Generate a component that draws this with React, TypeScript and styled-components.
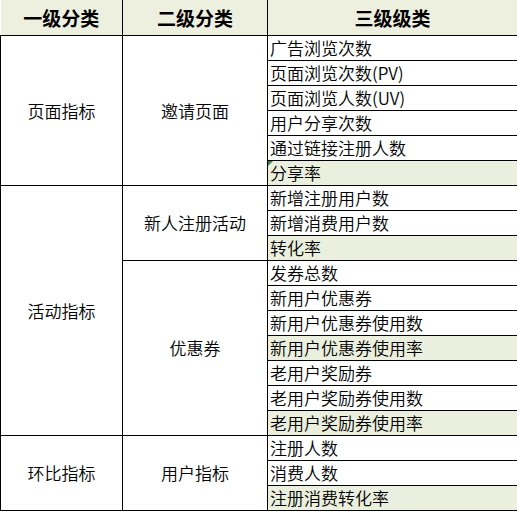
import styled, { createGlobalStyle } from 'styled-components'

const GlobalStyle = createGlobalStyle`
  html, body {
    margin: 0;
    padding: 0;
    background: #ffffff;
  }
  body {
    font-family: "Noto Sans CJK SC", "Microsoft YaHei", "Noto Sans", sans-serif;
    color: #000000;
  }
`

const HEAD_BG = '#edefdf'
const MARK_BG = '#ebf0de'

const Sheet = styled.table`
  width: 517px;
  border-collapse: collapse;
  table-layout: fixed;
`

const HeadRow = styled.tr`
  height: 35px;
`

const HeadCell = styled.th<{ $last?: boolean }>`
  background: ${HEAD_BG};
  font-size: 19px;
  font-weight: 700;
  text-align: center;
  padding: 0;
  border-bottom: 1px solid #000;
  border-right: 1px solid ${(p) => (p.$last ? '#8a8a80' : '#000')};
`

const BodyRow = styled.tr`
  height: 25px;
`

const GroupCell = styled.td`
  border: 1px solid #000;
  font-size: 17px;
  font-weight: 350;
  text-align: center;
  vertical-align: middle;
  padding: 0;
`

const ItemCell = styled.td<{ $mark?: boolean }>`
  position: relative;
  border: 1px solid #000;
  background: ${(p) => (p.$mark ? MARK_BG : '#fff')};
  font-size: 17px;
  font-weight: 350;
  line-height: 23px;
  padding: 0 0 0 2px;
  white-space: nowrap;
  overflow: hidden;
`

const NoteFlag = styled.span`
  position: absolute;
  left: 0;
  top: 0;
  width: 0;
  height: 0;
  border-top: 5px solid #2e8b3e;
  border-right: 5px solid transparent;
`

type Item = { label: string; mark?: boolean; flag?: boolean }
type Sub = { name: string; items: Item[] }
type Group = { name: string; subs: Sub[] }

const groups: Group[] = [
  {
    name: '页面指标',
    subs: [
      {
        name: '邀请页面',
        items: [
          { label: '广告浏览次数' },
          { label: '页面浏览次数(PV)' },
          { label: '页面浏览人数(UV)' },
          { label: '用户分享次数' },
          { label: '通过链接注册人数' },
          { label: '分享率', mark: true, flag: true },
        ],
      },
    ],
  },
  {
    name: '活动指标',
    subs: [
      {
        name: '新人注册活动',
        items: [
          { label: '新增注册用户数' },
          { label: '新增消费用户数' },
          { label: '转化率', mark: true },
        ],
      },
      {
        name: '优惠券',
        items: [
          { label: '发券总数' },
          { label: '新用户优惠券' },
          { label: '新用户优惠券使用数' },
          { label: '新用户优惠券使用率', mark: true },
          { label: '老用户奖励券' },
          { label: '老用户奖励券使用数' },
          { label: '老用户奖励券使用率', mark: true },
        ],
      },
    ],
  },
  {
    name: '环比指标',
    subs: [
      {
        name: '用户指标',
        items: [
          { label: '注册人数' },
          { label: '消费人数' },
          { label: '注册消费转化率', mark: true },
        ],
      },
    ],
  },
]

export default function App() {
  const rows: JSX.Element[] = []
  groups.forEach((g) => {
    const groupSpan = g.subs.reduce((n, s) => n + s.items.length, 0)
    g.subs.forEach((s, si) => {
      s.items.forEach((it, ii) => {
        rows.push(
          <BodyRow key={`${g.name}-${s.name}-${it.label}`}>
            {si === 0 && ii === 0 && (
              <GroupCell rowSpan={groupSpan}>{g.name}</GroupCell>
            )}
            {ii === 0 && <GroupCell rowSpan={s.items.length}>{s.name}</GroupCell>}
            <ItemCell $mark={it.mark}>
              {it.flag && <NoteFlag />}
              {it.label}
            </ItemCell>
          </BodyRow>,
        )
      })
    })
  })

  return (
    <>
      <GlobalStyle />
      <Sheet>
        <colgroup>
          <col style={{ width: 122 }} />
          <col style={{ width: 145 }} />
          <col style={{ width: 250 }} />
        </colgroup>
        <thead>
          <HeadRow>
            <HeadCell>一级分类</HeadCell>
            <HeadCell>二级分类</HeadCell>
            <HeadCell $last>三级级类</HeadCell>
          </HeadRow>
        </thead>
        <tbody>{rows}</tbody>
      </Sheet>
    </>
  )
}
